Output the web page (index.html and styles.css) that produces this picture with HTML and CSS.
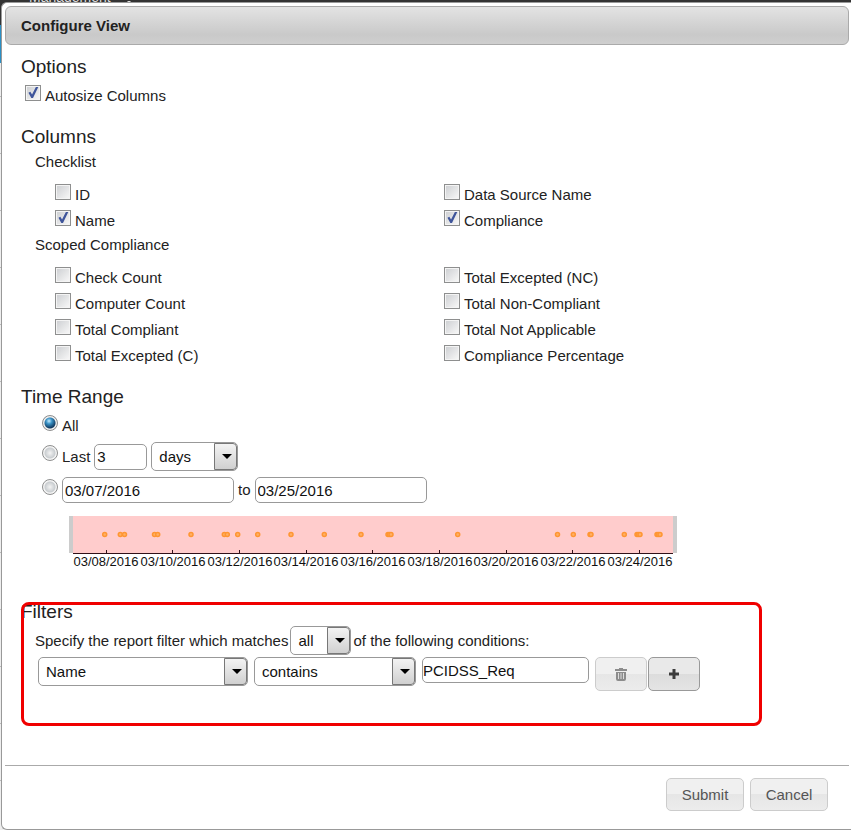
FILE: index.html
```html
<!DOCTYPE html>
<html lang="en">
<head>
<meta charset="utf-8">
<title>Configure View</title>
<link rel="stylesheet" href="styles.css">
</head>
<body>
<div class="backdrop"><div class="topbar"><span>Management</span><svg width="8" height="3" viewBox="0 0 8 3"><path d="M2 0h4L4 2z" fill="#ddd"/></svg></div><div class="active-tab"></div></div>
<form class="dialog" role="dialog" aria-labelledby="title">
  <header class="titlebar"><h1 id="title">Configure View</h1></header>
  <main class="content">
    <section class="options">
      <h2>Options</h2>
      <label class="check"><input type="checkbox" checked>Autosize Columns</label>
    </section>
    <section class="columns">
      <h2>Columns</h2>
      <h3>Checklist</h3>
      <div class="grid">
        <label class="check"><input type="checkbox">ID</label>
        <label class="check"><input type="checkbox">Data Source Name</label>
        <label class="check"><input type="checkbox" checked>Name</label>
        <label class="check"><input type="checkbox" checked>Compliance</label>
      </div>
      <h3>Scoped Compliance</h3>
      <div class="grid">
        <label class="check"><input type="checkbox">Check Count</label>
        <label class="check"><input type="checkbox">Total Excepted (NC)</label>
        <label class="check"><input type="checkbox">Computer Count</label>
        <label class="check"><input type="checkbox">Total Non-Compliant</label>
        <label class="check"><input type="checkbox">Total Compliant</label>
        <label class="check"><input type="checkbox">Total Not Applicable</label>
        <label class="check"><input type="checkbox">Total Excepted (C)</label>
        <label class="check"><input type="checkbox">Compliance Percentage</label>
      </div>
    </section>
    <section class="time">
      <h2>Time Range</h2>
      <div class="range-list">
        <label class="check"><input type="radio" name="range" checked>All</label>
        <div class="range">
          <label class="check"><input type="radio" name="range">Last</label>
          <input class="field count" type="text" value="3" aria-label="Amount">
          <span class="select unit"><select aria-label="Unit"><option>days</option></select></span>
        </div>
        <div class="range">
          <input type="radio" name="range" aria-label="Between dates">
          <input class="field date" id="from" type="text" value="03/07/2016" aria-label="From">
          <label for="to">to</label>
          <input class="field date" id="to" type="text" value="03/25/2016">
        </div>
      </div>
      <svg class="timeline" width="608" height="52" viewBox="0 0 608 52" role="img" aria-label="Timeline">
        <rect x="4" width="600" height="37" fill="#fcc"/>
        <rect width="4" height="37" fill="#ccc"/>
        <rect x="604" width="4" height="37" fill="#ccc"/>
        <path d="M4 37.500H604M37.500 34v3M103.500 34v3M170.500 34v3M237.500 34v3M303.500 34v3M370.500 34v3M437.500 34v3M503.500 34v3M570.500 34v3" stroke="#301018" fill="none"/>
        <g class="dots">
          <circle cx="35.700" cy="18.500" r="2"/><circle cx="51.300" cy="18.500" r="2"/><circle cx="55.500" cy="18.500" r="2"/>
          <circle cx="85.500" cy="18.500" r="2"/><circle cx="88.700" cy="18.500" r="2"/><circle cx="122" cy="18.500" r="2"/>
          <circle cx="155.300" cy="18.500" r="2"/><circle cx="158.300" cy="18.500" r="2"/><circle cx="168.700" cy="18.500" r="2"/>
          <circle cx="188.700" cy="18.500" r="2"/><circle cx="222" cy="18.500" r="2"/><circle cx="255.300" cy="18.500" r="2"/>
          <circle cx="292" cy="18.500" r="2"/><circle cx="319" cy="18.500" r="2"/><circle cx="320.500" cy="18.500" r="2"/><circle cx="322" cy="18.500" r="2"/>
          <circle cx="388.700" cy="18.500" r="2"/><circle cx="488.500" cy="18.500" r="2"/><circle cx="504.300" cy="18.500" r="2"/>
          <circle cx="521" cy="18.500" r="2"/><circle cx="522" cy="18.500" r="2"/><circle cx="555.300" cy="18.500" r="2"/>
          <circle cx="568" cy="18.500" r="2"/><circle cx="569.500" cy="18.500" r="2"/><circle cx="571" cy="18.500" r="2"/>
          <circle cx="588" cy="18.500" r="2"/><circle cx="589.500" cy="18.500" r="2"/><circle cx="591" cy="18.500" r="2"/>
        </g>
        <g class="ticks">
          <text x="37" y="50">03/08/2016</text><text x="104" y="50">03/10/2016</text><text x="171" y="50">03/12/2016</text>
          <text x="237" y="50">03/14/2016</text><text x="304" y="50">03/16/2016</text><text x="371" y="50">03/18/2016</text>
          <text x="437" y="50">03/20/2016</text><text x="504" y="50">03/22/2016</text><text x="571" y="50">03/24/2016</text>
        </g>
      </svg>
    </section>
    <section class="filters">
      <h2>Filters</h2>
      <div class="sentence">
        <label for="match">Specify the report filter which matches</label>
        <span class="select match"><select id="match"><option>all</option></select></span>
        <span>of the following conditions:</span>
      </div>
      <div class="condition">
        <span class="select column"><select aria-label="Column"><option>Name</option></select></span>
        <span class="select operator"><select aria-label="Operator"><option>contains</option></select></span>
        <input class="field value" type="text" value="PCIDSS_Req" aria-label="Value">
        <div class="tools">
          <button class="button tool" type="button" disabled aria-label="Remove condition"><svg width="12" height="13" viewBox="0 0 12 13"><path d="M4 0h4v1h4v2H0V1h4zM1 4h10v7q0 2-2 2H3q-2 0-2-2z" fill="#8c8c8c"/><path d="M3.500 5v6M6 5v6M8.500 5v6" stroke="#ddd"/></svg></button>
          <button class="button tool add" type="button" aria-label="Add condition"><svg width="10" height="10" viewBox="0 0 10 10"><path d="M3.500 0h3v3.500H10v3H6.500V10h-3V6.500H0v-3h3.500z" fill="#3c3c3c"/></svg></button>
        </div>
      </div>
      <div class="highlight"></div>
    </section>
  </main>
  <footer class="actions">
    <button class="button" type="button">Submit</button>
    <button class="button" type="button">Cancel</button>
  </footer>
</form>
</body>
</html>
```
FILE: styles.css
```css
* { box-sizing: border-box; }
body, h1, h2, h3 { margin: 0; }
body {
  background: repeating-linear-gradient(#eee 0 56px, #bbb 56px 57px) 0 40px;
  color: #222;
  font: 15px/20px "Liberation Sans", Arial, sans-serif;
}
input, select, button { font: inherit; color: #111; margin: 0; }

/* page behind the dialog */
.backdrop { position: absolute; top: 0; left: 0; right: 0; z-index: -1; }
.topbar {
  display: flex;
  align-items: flex-end;
  gap: 14px;
  height: 25px;
  padding: 0 0 21px 29px;
  background: #333;
  color: #ddd;
  font-size: 14px;
  line-height: 14px;
  overflow: hidden;
}
.active-tab { height: 38px; background: #2a8fc4; }

.dialog {
  margin: 2px 0 0 1px;
  padding: 3px 2px 0 3px;
  border: 1px solid #999;
  border-right: 0;
  border-radius: 6px 0 0 6px;
  background: #fff;
}
.titlebar {
  padding: 9px 15px 8px;
  border: 1px solid #aaa;
  border-radius: 6px;
  background: linear-gradient(#e3e3e3, #c9c9c9 75%, #cfcfcf);
}
h1 { font-size: 15px; line-height: 20px; }
.content { padding: 10px 16px 0; }
h2 { font-size: 19px; font-weight: 400; line-height: 24px; }
h3 { padding-left: 14px; font-size: 15px; font-weight: 400; line-height: 21px; }

.check { display: flex; align-items: center; gap: 4px; height: 26px; }
.options .check { margin: 4px 0 0 4px; }
.columns, .time { padding-top: 16px; }
.columns h2 { margin-bottom: 2px; }
.grid { display: grid; grid-template-columns: 1fr 1fr; padding: 10px 0 0 34px; }

input[type="checkbox"], input[type="radio"] {
  appearance: none;
  flex: none;
  width: 16px;
  height: 16px;
  margin-bottom: 7px;
}
input[type="checkbox"] {
  padding: 1px;
  border: 1px solid #8e8f8f;
  background: linear-gradient(135deg, #cfd1d4, #f6f6f6) content-box, #f4f4f4;
}
input[type="checkbox"]:checked::before {
  content: "";
  display: block;
  width: 12px;
  height: 12px;
  background: #3f559b;
  clip-path: polygon(12% 52%, 28% 44%, 42% 66%, 74% 4%, 94% 4%, 50% 96%, 36% 96%);
}
input[type="radio"] {
  border: 1px solid #8e8f8f;
  border-radius: 50%;
  background: radial-gradient(circle at 7px 7px, #f4f4f4, #c9cdd0 5px, #f4f4f4 6px);
}
input[type="radio"]:checked {
  background: radial-gradient(circle at 6px 5px, #d8f3ff, #3790c4 3px, #12395f 6px) 2px 2px / 10px 10px no-repeat, #eee;
  background: radial-gradient(circle at 7px 7px, transparent 5px, #eee 6px), radial-gradient(circle at 6px 5px, #c6ecff, #3790c4 3px, #12395f 7px);
}

.range-list { display: flex; flex-direction: column; gap: 3px; padding: 4px 0 13px 21px; }
.range { display: flex; align-items: center; gap: 4px; }
.range + .range { margin-top: 3px; }
.field {
  height: 26px;
  padding: 0 2px;
  border: 1px solid #999;
  border-radius: 5px;
  background: #fff;
}
.count { width: 53px; }
.date { width: 172px; }

.select { position: relative; display: block; height: 29px; }
.select select {
  appearance: none;
  width: 100%;
  height: 100%;
  padding: 0 24px 0 7px;
  border: 1px solid #999;
  border-radius: 5px;
  background: #fff;
}
.select::before {
  content: "";
  position: absolute;
  inset: 1px 1px 1px auto;
  width: 21px;
  border: 1px solid #777;
  border-radius: 0 4px 4px 0;
  background: linear-gradient(#f3f3f3, #d0d0d0);
  pointer-events: none;
}
.select::after {
  content: "";
  position: absolute;
  right: 6px;
  top: 12px;
  border: 5px solid transparent;
  border-top-color: #000;
  border-bottom: 0;
  pointer-events: none;
}
.unit { width: 87px; }
.match { width: 61px; }
.column { width: 210px; }
.operator { width: 162px; }

.timeline { display: block; margin-left: 48px; max-width: 100%; }
.dots { fill: #ffb066; stroke: #ff9632; stroke-width: 1.5px; }
.ticks { fill: #111; font-size: 13px; text-anchor: middle; }

.filters { position: relative; padding: 32px 0 74px; }
.sentence { display: flex; align-items: center; gap: 2px; padding: 2px 0 2px 14px; }
.condition { display: flex; align-items: flex-start; gap: 6px; padding-left: 17px; }
.value { width: 167px; padding: 0; }
.tools { display: flex; gap: 1px; }
.highlight {
  position: absolute;
  top: 34px;
  bottom: 39px;
  left: 0;
  width: 741px;
  border: 3px solid #f00000;
  border-radius: 8px;
  pointer-events: none;
}

.button {
  width: 78px;
  height: 33px;
  padding: 0;
  border: 1px solid #ccc;
  border-radius: 5px;
  background: linear-gradient(#f0f0f0 50%, #e6e6e6 50%, #ececec);
  color: #555;
}
.tool { display: grid; place-items: center; width: 52px; height: 34px; }
.add { border-color: #999; background: linear-gradient(#e9e9e9 50%, #dcdcdc 50%, #e4e4e4); }
.actions {
  display: flex;
  justify-content: flex-end;
  gap: 6px;
  padding: 12px 21px 18px;
  border-top: 1px solid #aaa;
}
```
